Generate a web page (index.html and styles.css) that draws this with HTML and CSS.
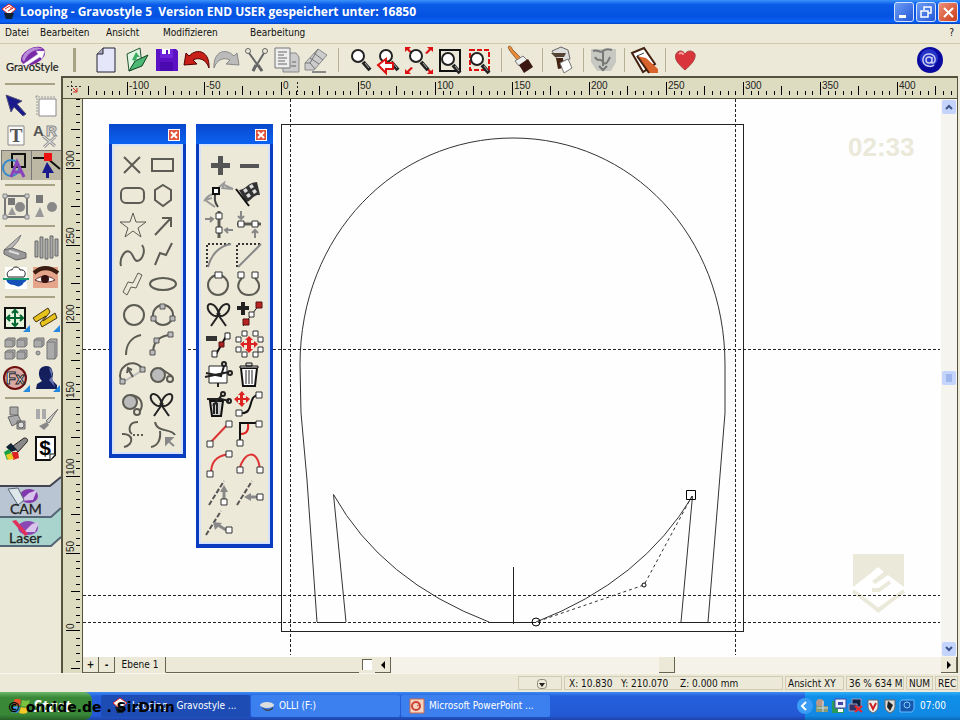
FILE: index.html
```html
<!DOCTYPE html>
<html lang="de">
<head>
<meta charset="utf-8">
<title>Looping - Gravostyle 5</title>
<link rel="stylesheet" href="styles.css">
</head>
<body>
<header class="titlebar">
  <svg class="appicon" width="16" height="18" viewBox="0 0 16 18"><path d="M8 1L15 6 8 12 1 6z" fill="#fff" stroke="#d22"/><path d="M4 6L9 3M7 8L12 5L9 5" stroke="#d22" fill="none"/><path d="M3 10h10l-2 6H5z" fill="#123"/></svg>
  <h1>Looping - Gravostyle 5&nbsp; Version END USER gespeichert unter: 16850</h1>
  <div class="winbuttons">
    <button class="win" aria-label="Minimieren"><svg width="18" height="18"><path d="M4 13.5h7" stroke="#fff" stroke-width="3"/></svg></button>
    <button class="win" aria-label="Wiederherstellen"><svg width="18" height="18"><path d="M7 7V4h7v6h-3M4 8h7v6H4z" stroke="#fff" stroke-width="1.5" fill="none"/></svg></button>
    <button class="win close" aria-label="Schließen"><svg width="18" height="18"><path d="M5 5l9 9M14 5l-9 9" stroke="#fff" stroke-width="2"/></svg></button>
  </div>
</header>
<nav class="menubar">
  <button>Datei</button><button>Bearbeiten</button><button>Ansicht</button><button>Modifizieren</button><button>Bearbeitung</button><button class="help">?</button>
</nav>
<div class="toolbar">
  <div class="logo"><svg width="60" height="32" viewBox="0 0 60 32"><ellipse cx="27" cy="12" rx="13" ry="8" transform="rotate(-28 27 12)" fill="#7a2aa8"/><path d="M16 15C19 5 29 1 37 5C27 5 21 10 18 18z" fill="#b98ad8"/><path d="M16 21L32 10l-2-3 9 0-3 8-2-2-14 9z" fill="#fff" stroke="#b9a6d6" stroke-width=".5"/><text x="0" y="27" class="logotext">GravoStyle</text></svg></div>
  <i class="sep thick"></i>
  <button class="tool" aria-label="Neu"><svg viewBox="0 0 30 30"><path d="M12 3H24V27H6V9z" fill="#e6e6fb" stroke="#223"/><path d="M6 9h6V3" fill="#aab" stroke="#223"/></svg></button>
  <button class="tool" aria-label="Öffnen"><svg viewBox="0 0 30 30"><path d="M6 9l13-6 2 17L8 26z" fill="#dff5e2" stroke="#253"/><path d="M8 26L14 16 27 10 21 21z" fill="#4db873" stroke="#142"/><path d="M11 15l4-8 4 5-3 0-1 4z" fill="#3cae60"/></svg></button>
  <button class="tool" aria-label="Speichern"><svg viewBox="0 0 30 30"><path d="M5 4H25l2 2V26H5z" fill="#5c12c4"/><path d="M9 4h13v9H9z" fill="#6f24dc"/><path d="M11 4h8v5h-8z" fill="#fff"/><path d="M15 5h2v4h-2z" fill="#5c12c4"/><path d="M9 17h13v9H9z" fill="#4a0ab0"/></svg></button>
  <button class="tool" aria-label="Rückgängig"><svg viewBox="0 0 30 30"><path d="M3 20L5 8l3 3C17 2 29 7 28 23C25 14 18 12 12 15l4 4z" fill="#c62018" stroke="#500"/></svg></button>
  <button class="tool" aria-label="Wiederholen"><svg viewBox="0 0 30 30"><path d="M28 20L26 8l-3 3C14 2 2 7 3 23C6 14 13 12 19 15l-4 4z" fill="#bbb" stroke="#888"/></svg></button>
  <button class="tool" aria-label="Ausschneiden"><svg viewBox="0 0 30 30" fill="none" stroke="#666"><path d="M8 8L21 26M23 8L12 26" stroke-width="2"/><path d="M12 26l3-6M21 26l-4-6" stroke-width="3"/><circle cx="7" cy="6" r="2.500"/><circle cx="24" cy="6" r="2.500"/></svg></button>
  <button class="tool" aria-label="Kopieren"><svg viewBox="0 0 30 30"><path d="M12 8h13l3 4v15H12z" fill="#ccc" stroke="#888"/><path d="M4 3h15v20H4z" fill="#eee" stroke="#777"/><path d="M7 7h9M7 10h6M7 13h9M7 16h7M7 19h9M21 17h4M20 21h5" stroke="#666"/></svg></button>
  <button class="tool" aria-label="Löschen"><svg viewBox="0 0 30 30"><path d="M4 18L17 4l9 6L13 25H4z" fill="#ccc" stroke="#888"/><path d="M17 4l-8 14 5 6M13 8l9 7M9 13l9 6" stroke="#777" fill="none"/><path d="M4 18h5" stroke="#777"/><path d="M11 27h14" stroke="#888" stroke-width="2"/></svg></button>
  <i class="sep wide"></i>
  <button class="tool" aria-label="Zoom"><svg viewBox="0 0 30 30"><use href="#lens"/></svg></button>
  <button class="tool" aria-label="Zoom zurück"><svg viewBox="0 0 30 30"><use href="#lens" x="-2"/><path d="M2 20l8-6v4h7v6h-7v4z" fill="#fff" stroke="#d11" stroke-width="2"/></svg></button>
  <button class="tool" aria-label="Zoom alles"><svg viewBox="0 0 30 30"><path d="M-1 2h6L3 4l4 4-2 1-4-4-2 2zM27 2h-6l2 2-4 4 2 1 4-4 2 2zM-1 29h6l-2-2 4-4-2-1-4 4-2-2zM27 29h-6l2-2-4-4 2-1 4 4 2-2z" fill="#d11"/><use href="#lens" x="-2"/></svg></button>
  <button class="tool" aria-label="Zoom Seite"><svg viewBox="0 0 30 30"><path d="M4 5H24V26H4z" fill="none" stroke="#111" stroke-width="2"/><use href="#lens" y="3"/></svg></button>
  <button class="tool" aria-label="Zoom Auswahl"><svg viewBox="0 0 30 30"><path d="M4 5H23V25H4z" fill="none" stroke="#d11" stroke-width="2" stroke-dasharray="5 2"/><use href="#lens" x="-1" y="3"/></svg></button>
  <i class="sep"></i>
  <button class="tool" aria-label="Pinsel"><svg viewBox="0 0 30 30"><path d="M1 2c2-2 4 0 4 2l9 9-3 3-8-10z" fill="#e88a3c" stroke="#963"/><path d="M8 16l8-5 4 4-8 6z" fill="#eee" stroke="#777"/><path d="M12 20l9-6 5 8-9 6z" fill="#3a1712"/></svg></button>
  <i class="sep"></i>
  <button class="tool" aria-label="Gravieren"><svg viewBox="0 0 30 30"><path d="M4 6l9-4 7 3 2 9-11 3z" fill="#ddd" stroke="#666"/><path d="M3 8h15l-2 4H7z" fill="#543"/><path d="M8 13h7v10l-5 1z" fill="#421"/><path d="M12 18l8-4 4 9-8 5z" fill="#fff" stroke="#777"/></svg></button>
  <i class="sep"></i>
  <button class="tool" aria-label="Relief"><svg viewBox="0 0 30 30"><path d="M2 4h25v13l-5 9H8l-6-9z" fill="#c8c8c2"/><path d="M4 6c6-2 7 3 10 0s6-2 9-1M6 12c3 6 5 0 8 5s6-3 7-5M10 21l4 4 4-4M14 7v14" stroke="#777" stroke-width="2" fill="none"/></svg></button>
  <i class="sep"></i>
  <button class="tool" aria-label="Notiz"><svg viewBox="0 0 30 30"><path d="M2 8l12-5 11 16-12 8z" fill="#fff" stroke="#421" stroke-width="2"/><path d="M7 11l7-3" stroke="#444"/><path d="M7 11l9 2 12 11v4h-9z" fill="#d8642c"/><path d="M7 11l12 17" stroke="#421" stroke-width="2"/></svg></button>
  <i class="sep"></i>
  <button class="tool" aria-label="Favorit"><svg viewBox="0 0 30 30"><path d="M14 25C7 19 3 14 5 9C7 5 12 5 14 9C16 5 22 5 24 9C25 14 21 19 14 25z" fill="#d9343c" stroke="#a44"/><path d="M8 9c2-2 4-1 4 1" stroke="#f99" fill="none" stroke-width="2"/></svg></button>
  <button class="tool web" aria-label="Internet"><svg viewBox="0 0 30 30"><circle cx="15" cy="15" r="13" fill="#0a0aa0"/><circle cx="14" cy="13" r="9" fill="#2434c8"/><path d="M17 12v6c4 1 5-8-2-9c-8-1-10 10-2 12c3 1 5 0 6-1M17 15a3 3 0 1 0-3 3c2 0 3-1 3-3" stroke="#cce" stroke-width="1.5" fill="none"/></svg></button>
</div>
<main>
  <aside class="sidebar">
    <hr>
    <div class="pair">
      <button class="tool" aria-label="Auswahl"><svg viewBox="0 0 30 30"><path d="M5 5l16 6-5 3 9 10-3 2-9-9-3 5z" fill="#1a1a8c" stroke="#557"/></svg></button>
      <button class="tool" aria-label="Seite"><svg viewBox="0 0 30 30"><path d="M4 7h20M6 5v20" fill="none" stroke="#999" stroke-dasharray="2 1"/><path d="M8 9h17v17H8z" fill="#fff" stroke="#888"/></svg></button>
      <button class="tool" aria-label="Text"><svg viewBox="0 0 30 30"><path d="M7 6h16v19H7z" fill="#fafafa" stroke="#888"/><text x="15" y="22" text-anchor="middle" class="serif">T</text></svg></button>
      <button class="tool" aria-label="Textstil"><svg viewBox="0 0 30 30"><path d="M12 16l12 10M24 17l-11 10" stroke="#999" stroke-width="3"/><path d="M12 16l12 10M24 17l-11 10" stroke="#eee"/><text x="2" y="16" class="letter">A</text><text x="15" y="16" class="letter light">R</text></svg></button>
      <button class="tool pressed" aria-label="Formen"><svg viewBox="0 0 30 30"><path d="M11 4h13v13H11z" fill="none" stroke="#111" stroke-width="2"/><circle cx="10" cy="18" r="8" fill="none" stroke="#38c" stroke-width="2"/><path d="M10 27l6-15 7 15M12 22h9" fill="none" stroke="#84b" stroke-width="3"/></svg></button>
      <button class="tool pressed" aria-label="Punkte"><svg viewBox="0 0 30 30"><path d="M2 8h14l13 11" stroke="#111" fill="none" stroke-width="2"/><path d="M13 3h8v8h-8z" fill="#e11"/><path d="M16 12l7 11h-5v5h-3v-5h-4z" fill="#1a1a8c"/></svg></button>
    </div>
    <hr>
    <div class="pair">
      <button class="tool" aria-label="Gruppieren"><svg viewBox="0 0 30 30"><path d="M4 5h22v21H4z" fill="none" stroke="#777" stroke-width="2"/><path d="M2 3h4v4H2zM24 3h4v4h-4zM2 24h4v4H2zM24 24h4v4h-4z" fill="#ccc" stroke="#888"/><path d="M7 7h7v7H7z" fill="#777"/><circle cx="19" cy="16" r="5" fill="#888"/><path d="M11 16l4 8H7z" fill="#999"/></svg></button>
      <button class="tool" aria-label="Gruppierung aufheben"><svg viewBox="0 0 30 30"><path d="M5 4h7v8H5z" fill="#777"/><circle cx="21" cy="16" r="5" fill="#888"/><path d="M9 16l4 10H4z" fill="#999"/></svg></button>
    </div>
    <hr>
    <div class="pair">
      <button class="tool" aria-label="Scannen"><svg viewBox="0 0 30 30"><path d="M3 18L20 3l-3 6-7 8z" fill="#bbb" stroke="#777"/><path d="M3 18l8-2 14 5v5l-10 2-12-6z" fill="#999" stroke="#666"/><path d="M8 19l10 3" stroke="#ddd" stroke-width="2"/></svg></button>
      <button class="tool" aria-label="Bibliothek"><svg viewBox="0 0 30 30"><path d="M4 9h3v16H4zM9 5h3v21H9zM14 7h3v20h-3zM19 4h3v22h-3zM24 7h3v17h-3z" fill="#aaa" stroke="#666"/></svg></button>
      <button class="tool" aria-label="Vektorisieren"><svg viewBox="0 0 30 30"><path d="M4 5h22v22H4z" fill="#fff"/><path d="M7 15C4 10 10 7 11 8c1-4 7-4 8 0 6-1 6 5 4 7z" fill="#fff" stroke="#222"/><path d="M5 16h21c0 4-4 4-4 6-4 4-6 2-9 1-5 0-8-3-8-7z" fill="#1450b8"/><path d="M2 17h26" stroke="#1a9870" stroke-width="2"/></svg></button>
      <button class="tool" aria-label="Foto"><svg viewBox="0 0 30 30"><path d="M2 5h25v21H2z" fill="#e5a58a"/><path d="M3 11c8-7 16-6 24 0" stroke="#3a1c10" stroke-width="4" fill="none"/><path d="M4 18c6-5 14-5 20 0-6 3-14 3-20 0z" fill="#fff" stroke="#633"/><circle cx="14" cy="17" r="4" fill="#311"/></svg></button>
    </div>
    <hr>
    <div class="pair">
      <button class="tool" aria-label="Verschieben"><svg viewBox="0 0 30 30"><path d="M4 5h20v20H4z" fill="#e8f4dc" stroke="#111" stroke-width="2"/><path d="M14 7v16M6 15h16M11 10l3-3 3 3M11 20l3 3 3-3M9 12l-3 3 3 3M19 12l3 3-3 3" stroke="#063" stroke-width="2" fill="none"/><use href="#corner"/></svg></button>
      <button class="tool" aria-label="Messen"><svg viewBox="0 0 30 30"><path d="M2 15l15-10 2 4-7 9 12-8 2 5-15 9-2-4 6-7-10 6z" fill="#e6c21c" stroke="#431"/><use href="#corner"/></svg></button>
      <button class="tool" aria-label="Ausrichten"><svg viewBox="0 0 30 30" fill="#aaa" stroke="#777"><path d="M4 7l3-2h7v7l-2 2H4zM16 7l3-2h7v7l-2 2h-8zM4 19l3-2h7v7l-2 2H4zM16 19l3-2h7v7l-2 2h-8zM4 7h8v7M16 7h8v7M4 19h8v7M16 19h8v7"/></svg></button>
      <button class="tool" aria-label="Verteilen"><svg viewBox="0 0 30 30" fill="#aaa" stroke="#777"><path d="M3 7l3-2h7v7l-2 2H3zM16 9l3-3h7v17l-2 3h-8zM3 7h8v7M16 9h8v17"/><circle cx="7" cy="20" r="2"/></svg></button>
      <button class="tool" aria-label="Effekte"><svg viewBox="0 0 30 30"><circle cx="14" cy="15" r="11" fill="#d9a9a4" stroke="#6e0f0f" stroke-width="2"/><text x="5" y="21" class="fx">Fx</text><use href="#corner"/></svg></button>
      <button class="tool" aria-label="Porträt"><svg viewBox="0 0 30 30"><path d="M9 6c3-4 11-4 12 1l1 4-1 6 5 5v4H5l1-5 5-3c-3-3-4-8-2-12z" fill="#14205e"/><path d="M18 5c4 1 3 5 3 8l-3 4 6 7z" fill="#6674b0"/><use href="#corner"/></svg></button>
    </div>
    <hr>
    <div class="pair">
      <button class="tool" aria-label="Maschine"><svg viewBox="0 0 30 30" fill="#aaa" stroke="#666"><path d="M9 3h8v8H9zM7 13l10-2 3 6-9 5zM16 17h8v8h-8z"/><circle cx="20" cy="21" r="3" fill="#ddd"/></svg></button>
      <button class="tool" aria-label="Farben"><svg viewBox="0 0 30 30"><path d="M5 5h4v10H5zM11 5h4v10h-4z" fill="#aaa"/><path d="M27 5l-9 14-3-2z" fill="#ccc" stroke="#777"/><path d="M8 22l8-4 2 3-5 5z" fill="#888"/></svg></button>
      <button class="tool" aria-label="Malen"><svg viewBox="0 0 30 30"><path d="M12 12l11-8c4 0 4 2 3 4l-9 10z" fill="#888" stroke="#222"/><path d="M5 13l5-4 6 7-6 2z" fill="#123"/><path d="M3 18l5-3 4 7-6 4z" fill="#18a044"/><path d="M11 18l6 0 1 6-6 2z" fill="#d22"/><path d="M5 21l5-2 3 6-6 1z" fill="#ec2"/></svg></button>
      <button class="tool" aria-label="Kosten"><svg viewBox="0 0 30 30"><path d="M5 3h19v18l-5 5H5z" fill="#fff" stroke="#111" stroke-width="2"/><path d="M24 20h-5v6" fill="#fff" stroke="#111"/><text x="14" y="21" text-anchor="middle" class="dollar">$</text></svg></button>
    </div>
    <div class="modes">
      <button class="mode" aria-label="CAM"><svg width="61" height="40" viewBox="0 0 61 40"><path d="M0 9H50L61 0V30L51 40H0z" fill="#b9c5d2"/><path d="M0 9H50L61 0" fill="none" stroke="#445" stroke-width="2"/><ellipse cx="29" cy="19" rx="9" ry="7" fill="#8038ac"/><path d="M20 24l9-8 8-3-4 10z" fill="#d9c4ec"/><path d="M8 12l10-1 6 12-6 5z" fill="#dfe6ea" stroke="#567"/><text x="10" y="37" class="modetext">CAM</text></svg></button>
      <button class="mode" aria-label="Laser"><svg width="61" height="30" viewBox="0 0 61 30"><path d="M0 0H51L61-9V20L51 30H0z" fill="#a9d3cd"/><path d="M0 0H51L61-9M0 29H51L61 20" fill="none" stroke="#567" stroke-width="2"/><ellipse cx="28" cy="11" rx="10" ry="7" fill="#8a48b4"/><path d="M24 15l8-8 7-2-4 10z" fill="#d9c4ec"/><path d="M12 4l4-1 12 14-3 2z" fill="#e2305c"/><text x="9" y="26" class="modetext">Laser</text></svg></button>
    </div>
  </aside>
  <section class="workspace">
    <svg class="hruler" width="100%" height="20">
      <defs>
        <pattern id="ht" x="218" y="0" width="77" height="20" patternUnits="userSpaceOnUse"><path d="M0 4h1v13h-1zM38 8h1v9h-1zM8 13h1v4h-1zM15 13h1v4h-1zM23 13h1v4h-1zM31 13h1v4h-1zM46 13h1v4h-1zM54 13h1v4h-1zM62 13h1v4h-1zM69 13h1v4h-1z"/></pattern>
        <pattern id="vt" x="0" y="531" width="20" height="77" patternUnits="userSpaceOnUse"><path d="M3 0h14v1h-14zM8 38h9v1h-9zM13 8h4v1h-4zM13 15h4v1h-4zM13 23h4v1h-4zM13 31h4v1h-4zM13 46h4v1h-4zM13 54h4v1h-4zM13 62h4v1h-4zM13 69h4v1h-4z"/></pattern>
      </defs>
      <rect x="22" width="871" height="20" fill="url(#ht)"/>
      <path d="M4 8.500h14M8.500 3v14" stroke="#333" stroke-dasharray="2 2"/><path d="M10 10l4 4M14 10v4h-4" stroke="#c22" fill="none"/>
      <path d="M234.500 4v13" stroke="#222" stroke-dasharray="2 2"/>
      <g class="ticklabel"><text x="66" y="11">-100</text><text x="143" y="11">-50</text><text x="220" y="11">0</text><text x="297" y="11">50</text><text x="374" y="11">100</text><text x="451" y="11">150</text><text x="528" y="11">200</text><text x="605" y="11">250</text><text x="682" y="11">300</text><text x="759" y="11">350</text><text x="836" y="11">400</text></g>
    </svg>
    <svg class="vruler" width="20" height="100%">
      <rect width="20" height="100%" fill="url(#vt)"/>
      <g class="ticklabel"><text transform="translate(11 530) rotate(-90)">0</text><text transform="translate(11 453) rotate(-90)">50</text><text transform="translate(11 376) rotate(-90)">100</text><text transform="translate(11 299) rotate(-90)">150</text><text transform="translate(11 222) rotate(-90)">200</text><text transform="translate(11 145) rotate(-90)">250</text><text transform="translate(11 68) rotate(-90)">300</text></g>
    </svg>
    <svg class="canvas" width="100%" height="100%">
      <g transform="translate(-83 -99)">
        <path d="M853 554h51v37l-25.500 22-25.500-22z" fill="#ebe9da"/>
        <path d="M853 587l18-14 7-6 6 5-12 9 3 3 13-9 16 12v3l-25.500 20-25.500-20z" fill="#fff"/><path d="M872 590h7l11-8" stroke="#ebe9da" stroke-width="4" fill="none"/>
        <path d="M853 591l25.500 19 25.500-19" stroke="#ebe9da" stroke-width="4" fill="none"/>
        <text x="848" y="156" class="clockmark">02:33</text>
        <g fill="none" stroke="#222" shape-rendering="crispEdges">
          <path d="M83 349.500H940M83 595.500H940M83 622.500H940M290.500 99V655M735.500 99V655" stroke-dasharray="3 2"/>
          <path d="M281.500 124.500H743.500V631.500H281.500zM513.500 567V624M317 622.500H346M681 622.500H708M489 622.500H536"/>
        </g>
        <g fill="none" stroke="#333">
          <path d="M317 622L307 480 301 413 300 365C300 235 395 138 513 138C631 138 725 235 725 365V413L718 500 708 622"/>
          <path d="M346 622L333.500 494.500Q382 581 489 622M681 622L692.500 496Q642 581 536 622"/>
          <path d="M692 496L644 585 536 622" stroke-dasharray="3 3"/>
          <path d="M686.500 490.500h9v9h-9z" stroke="#000"/><circle cx="536" cy="622" r="4" stroke="#000"/><circle cx="644" cy="585" r="2" fill="#fff" stroke="#000"/>
        </g>
      </g>
    </svg>
    <div class="vscroll"><button aria-label="Nach oben"><svg width="14" height="14"><path d="M4 9l3-3 3 3" class="chev"/></svg></button><button aria-label="Bildlauf"><svg width="14" height="14"><path d="M4 4h6M4 6h6M4 8h6M4 10h6" stroke="#7a9ad8"/></svg></button><button aria-label="Nach unten"><svg width="14" height="14"><path d="M4 5l3 3 3-3" class="chev"/></svg></button></div>
    <div class="layers">
      <button class="lay small">+</button><button class="lay small">-</button><button class="lay name">Ebene 1</button>
      <div class="track"></div>
      <input type="checkbox" aria-label="Ebene sichtbar">
      <button class="lay small" aria-label="Nach links"><svg width="8" height="8"><path d="M6 0v8L2 4z"/></svg></button>
      <div class="hscroll"><i></i></div>
      <button class="lay small" aria-label="Nach rechts"><svg width="8" height="8"><path d="M2 0v8l4-4z"/></svg></button>
    </div>
  </section>
</main>
<footer class="status">
  <span class="cell lock"><svg width="12" height="13"><rect x="1.500" y="2.500" width="9" height="9" rx="3" fill="none" stroke="#887"/><path d="M3 6h6L6 10z" fill="#222"/></svg></span>
  <span class="cell coords"><span>X: 10.830</span><span>Y: 210.070</span><span>Z: 0.000 mm</span></span>
  <span class="cell view">Ansicht XY</span><span class="cell mem">36 % 634 M</span><span class="cell num">NUM</span><span class="cell rec">REC</span>
</footer>
<div class="taskbar">
  <button class="start"><svg width="22" height="20" viewBox="0 0 22 20"><path d="M3 4c3-2 5-1 7 0l-1 6c-3-1-5-1-7 0z" fill="#e8542c"/><path d="M11 4c3 1 5 1 8 0l-2 6c-2 1-4 1-7 0z" fill="#7cc242"/><path d="M2 11c3-1 4-1 7 0l-2 6c-2-1-4-1-6 0z" fill="#4a9ae8"/><path d="M10 11c2 1 5 1 7 0l-1 6c-3 1-5 1-8 0z" fill="#f4c828"/></svg>Start</button>
  <button class="task active"><svg width="16" height="18" viewBox="0 0 16 18"><path d="M8 1L15 6 8 12 1 6z" fill="#fff" stroke="#d22"/><path d="M3 10h10l-2 6H5z" fill="#123"/></svg>Looping - Gravostyle ...</button>
  <button class="task"><svg width="16" height="18" viewBox="0 0 16 18"><ellipse cx="8" cy="8" rx="7" ry="3" fill="#ddd"/><path d="M2 9c3 4 8 5 12 1v2c-4 3-9 3-12-3z" fill="#444"/></svg>OLLI (F:)</button>
  <button class="task"><svg width="16" height="18" viewBox="0 0 16 18"><path d="M1 2h14v14H1z" fill="#f6d4c4" stroke="#c64"/><circle cx="7" cy="9" r="4" fill="none" stroke="#c43" stroke-width="2"/><path d="M8 9l3-2" stroke="#c43"/></svg>Microsoft PowerPoint ...</button>
  <div class="tray">
    <button class="expand" aria-label="Symbole einblenden"><svg width="16" height="18"><circle cx="8" cy="9" r="8" fill="#3a9cf4"/><path d="M9 5L5 9l4 4" stroke="#fff" stroke-width="2" fill="none"/></svg></button>
    <svg width="16" height="16"><circle cx="6" cy="5" r="4" fill="#b98"/><path d="M2 8h12v6H2z" fill="#8b9a70"/><path d="M9 3v11M3 10h11" stroke="#cde"/></svg>
    <svg width="16" height="16"><path d="M1 3h12v12H1z" fill="#2a9a5a"/><path d="M4 1h11v9H4z" fill="#e8f0ff" stroke="#44a"/><path d="M7 4h5v3H7z" fill="#44a"/><path d="M7 11h5v3H7z" fill="#fff"/></svg>
    <svg width="16" height="16"><path d="M4 1h9v8H4z" fill="#124" stroke="#99b"/><path d="M1 6h8v7H1z" fill="#336" stroke="#99b"/><path d="M7 8l7 6M14 8l-7 6" stroke="#e22" stroke-width="2"/></svg>
    <svg width="16" height="16"><path d="M3 2h10v7c0 3-3 5-5 6-2-1-5-3-5-6z" fill="#eee" stroke="#666"/><path d="M5 5l3 6 3-6" stroke="#c22" stroke-width="2" fill="none"/></svg>
    <svg width="16" height="16"><path d="M3 2h10v7c0 3-3 5-5 6-2-1-5-3-5-6z" fill="#ddd" stroke="#666"/><path d="M6 3l5 4-3 6-3-4z" fill="#222"/></svg>
    <svg width="16" height="16"><path d="M3 2h12v9l-2 3H1V4z" fill="#1558b0" stroke="#6bf"/><circle cx="8" cy="7" r="3" fill="none" stroke="#8cf"/></svg>
    <time>07:00</time>
  </div>
  <span class="credit">© onride.de . SirDinn</span>
</div>

<div class="palette shapes">
  <div class="pbar"><button class="pclose" aria-label="Schließen"><svg width="10" height="10"><path d="M2 2l6 6M8 2l-6 6" stroke="#fff" stroke-width="2"/></svg></button></div>
  <div class="pbody">
    <button class="tool" aria-label="Kreuz"><svg viewBox="0 0 30 30" class="ln"><path d="M7 7l16 16M23 7L7 23"/></svg></button>
    <button class="tool" aria-label="Rechteck"><svg viewBox="0 0 30 30" class="ln"><path d="M5 9h21v12H5z"/></svg></button>
    <button class="tool" aria-label="Abgerundetes Rechteck"><svg viewBox="0 0 30 30" class="ln"><rect x="4" y="8" width="23" height="15" rx="5"/></svg></button>
    <button class="tool" aria-label="Vieleck"><svg viewBox="0 0 30 30" class="ln"><path d="M16 5l8 5v10l-8 6-8-6V10z"/></svg></button>
    <button class="tool" aria-label="Stern"><svg viewBox="0 0 30 30" class="ln thin"><path d="M16 3l3 9h10l-8 6 3 9-8-6-8 6 3-9-8-6h10z"/></svg></button>
    <button class="tool" aria-label="Pfeil"><svg viewBox="0 0 30 30" class="ln"><path d="M8 25L24 8M15 8h9v9"/></svg></button>
    <button class="tool" aria-label="Kurve"><svg viewBox="0 0 30 30" class="ln"><path d="M4 26C2 18 8 9 13 12C17 15 16 20 20 21C26 20 29 10 25 5"/></svg></button>
    <button class="tool" aria-label="Linienzug"><svg viewBox="0 0 30 30" class="ln"><path d="M8 25l5-12 6 2 6-12"/></svg></button>
    <button class="tool" aria-label="Band"><svg viewBox="0 0 30 30" class="ln thin"><path d="M6 22l5-10 5 1 5-10 4 2-6 13-5-1-4 8z"/></svg></button>
    <button class="tool" aria-label="Ellipse"><svg viewBox="0 0 30 30" class="ln"><ellipse cx="16" cy="14" rx="13" ry="6"/></svg></button>
    <button class="tool" aria-label="Kreis"><svg viewBox="0 0 30 30" class="ln"><circle cx="17" cy="15" r="10"/></svg></button>
    <button class="tool" aria-label="Kreis mit drei Punkten"><svg viewBox="0 0 30 30" class="ln"><circle cx="16" cy="15" r="10"/><g class="gnode"><path d="M13 4h5v5h-5zM4 16h5v5H4zM23 16h5v5h-5z"/></g></svg></button>
    <button class="tool" aria-label="Bogen"><svg viewBox="0 0 30 30" class="ln"><path d="M9 25C9 14 15 7 24 5"/></svg></button>
    <button class="tool" aria-label="Bogen mit Punkten"><svg viewBox="0 0 30 30" class="ln"><path d="M6 23c0-6 1-9 4-12M10 10c4-3 8-5 14-5"/><g class="gnode"><path d="M3 20h5v5H3zM7 8h5v5H7zM21 2h5v5h-5z"/></g></svg></button>
    <button class="tool" aria-label="Bogen mit Radius"><svg viewBox="0 0 30 30" class="ln"><path d="M6 22L26 10" stroke="#bbb"/><path d="M4 20C-1 9 14-4 25 8" /><path d="M16 17l-5-8M10 13l1-5 4 2"/><g class="gnode"><path d="M3 19h5v5H3zM23 7h5v5h-5z"/></g></svg></button>
    <button class="tool" aria-label="Tangente außen"><svg viewBox="0 0 30 30" class="ln"><circle cx="11" cy="15" r="7" fill="#bbb"/><circle cx="23" cy="19" r="3"/><path d="M13 8l12 8"/></svg></button>
    <button class="tool" aria-label="Tangente innen"><svg viewBox="0 0 30 30" class="ln"><circle cx="13" cy="12" r="7" fill="#bbb"/><circle cx="20" cy="22" r="3"/><path d="M14 5c10 1 13 9 9 16"/></svg></button>
    <button class="tool" aria-label="Schleife"><svg viewBox="0 0 30 30" class="ln dark"><use href="#bow"/></svg></button>
    <button class="tool" aria-label="Verlängern"><svg viewBox="0 0 30 30" class="ln"><path d="M21 2c-11 0-9 10-6 12M5 14c12-1 12 11 2 13"/><path d="M16 15h11" stroke-dasharray="2 2"/></svg></button>
    <button class="tool" aria-label="Trennen"><svg viewBox="0 0 30 30" class="ln"><path d="M8 2c2 11 16 6 20 13M4 27c7-1 10-8 9-16"/><path d="M27 26l-8-7M19 24v-6h6z" stroke="#888" fill="#888"/></svg></button>
  </div>
</div>

<div class="palette nodes">
  <div class="pbar"><button class="pclose" aria-label="Schließen"><svg width="10" height="10"><path d="M2 2l6 6M8 2l-6 6" stroke="#fff" stroke-width="2"/></svg></button></div>
  <div class="pbody">
    <button class="tool" aria-label="Hinzufügen"><svg viewBox="0 0 30 30"><path d="M14 6h5v7h7v5h-7v7h-5v-7H7v-5h7z" fill="#555"/></svg></button>
    <button class="tool" aria-label="Entfernen"><svg viewBox="0 0 30 30"><path d="M6 14h19v4H6z" fill="#555"/></svg></button>
    <button class="tool" aria-label="Glätten"><svg viewBox="0 0 30 30" class="ln"><path d="M12 13C4 15 2 18 1 20l7-2M1 20l10 7M12 11C15 7 17 5 20 3l-2 6M18 4l11 5-11-1" stroke="#999"/><path d="M12 12c-2 5-1 11 2 15" stroke="#444"/><g class="wnode"><path d="M9 8h6v6H9z" stroke="#111" stroke-width="2"/></g></svg></button>
    <button class="tool" aria-label="Start"><svg viewBox="0 0 30 30"><path d="M5 10c7 0 8-7 18-8l3 13c-7-1-8 6-14 7z" fill="#333"/><path d="M9 10l2 3 3-2-2-3zM15 6l2 3 3-2-2-3zM12 15l2 3 3-2-2-3zM18 11l2 3 3-2-2-3z" fill="#ddd"/><path d="M2 9l13 17" stroke="#111" stroke-width="2"/></svg></button>
    <button class="tool" aria-label="Vertikal ausrichten"><svg viewBox="0 0 30 30" class="ln"><path d="M15 1v27" stroke-width="3"/><path d="M1 9h8M6 7l3 2-3 3M29 20h-8M24 18l-3 2 3 3" stroke="#888"/><g class="wnode"><path d="M12 3h6v6h-6zM12 17h6v6h-6z"/></g></svg></button>
    <button class="tool" aria-label="Horizontal ausrichten"><svg viewBox="0 0 30 30" class="ln"><path d="M3 14h24" stroke-width="3"/><path d="M7 1v8M4 6l3 3 3-3M21 28v-8M18 23l3-3 3 3" stroke="#888"/><g class="wnode"><path d="M4 11h6v6H4zM18 11h6v6h-6z"/></g></svg></button>
    <button class="tool" aria-label="In Kurve"><svg viewBox="0 0 30 30" class="ln"><path d="M3 27V4h24" stroke="#333" stroke-dasharray="2 2"/><path d="M4 27C7 15 15 6 27 4" stroke="#888"/></svg></button>
    <button class="tool" aria-label="In Linie"><svg viewBox="0 0 30 30" class="ln"><path d="M3 27V4h24" stroke="#333" stroke-dasharray="2 2"/><path d="M4 27L27 4" stroke="#888"/></svg></button>
    <button class="tool" aria-label="Schließen"><svg viewBox="0 0 30 30" class="ln"><circle cx="14" cy="15" r="10"/><g class="wnode"><path d="M11 2h7v6h-7z"/></g></svg></button>
    <button class="tool" aria-label="Öffnen"><svg viewBox="0 0 30 30" class="ln"><path d="M8 8C0 16 6 25 15 25S29 16 21 8"/><g class="wnode"><path d="M4 2h6v6H4zM18 2h6v6h-6z"/></g></svg></button>
    <button class="tool" aria-label="Schleife"><svg viewBox="0 0 30 30" class="ln dark"><use href="#bow"/></svg></button>
    <button class="tool" aria-label="Punkt einfügen"><svg viewBox="0 0 30 30"><path d="M7 2h4v4h4v4h-4v5H7v-5H3V6h4z" fill="#222"/><path d="M9 26L25 5" stroke="#111"/><path d="M22 2h6v6h-6zM9 19h6v6H9z" fill="#b22" stroke="#511"/><path d="M15 12h5v5h-5z" fill="#fff" stroke="#333"/></svg></button>
    <button class="tool" aria-label="Punkt löschen"><svg viewBox="0 0 30 30"><path d="M2 6h11v5H2z" fill="#333"/><path d="M11 26L24 3" stroke="#111" stroke-width="2"/><path d="M21 3h5v6h-5zM8 21h5v6H8z" fill="#fff" stroke="#222"/><path d="M15 12h5v5h-5z" fill="#a22" stroke="#511"/></svg></button>
    <button class="tool" aria-label="Punkte verschieben"><svg viewBox="0 0 30 30"><path d="M15 6l4 4h-2v3h3v-2l4 3-4 4v-3h-3v4h2l-4 4-4-4h2v-4h-3v3l-4-4 4-3v2h3v-3h-2z" fill="#d22"/><g class="wnode"><path d="M8 1h5v5H8zM19 1h5v5h-5zM2 7h5v5H2zM24 7h5v5h-5zM2 17h5v5H2zM24 17h5v5h-5zM8 22h5v5H8zM19 22h5v5h-5z"/></g></svg></button>
    <button class="tool" aria-label="Schneiden"><svg viewBox="0 0 30 30" class="ln dark"><path d="M5 6h18v17H5z" fill="#fff" stroke-width="1"/><path d="M1 17l24-5M2 13l15 3 3-10M14 23v4"/><circle cx="20" cy="4" r="2"/><circle cx="26" cy="13" r="2"/></svg></button>
    <button class="tool" aria-label="Papierkorb"><svg viewBox="0 0 30 30"><path d="M7 8h16l-2 18H9z" fill="#fff" stroke="#111" stroke-width="2"/><path d="M12 10v14M15 10v14M18 10v14" stroke="#222"/><path d="M6 6h18v2H6zM12 3h6v3h-6z" fill="#ddd" stroke="#111"/></svg></button>
    <button class="tool" aria-label="Schneiden und löschen"><svg viewBox="0 0 30 30"><path d="M6 11h13l-2 15H8z" fill="#ccc" stroke="#111" stroke-width="2"/><path d="M10 13v11M13 13v11" stroke="#222" stroke-width="2"/><g class="ln dark"><path d="M3 9h14l8 2M9 16L18 5"/><circle cx="19" cy="4" r="2"/><circle cx="25" cy="11" r="2"/></g></svg></button>
    <button class="tool" aria-label="Segment verschieben"><svg viewBox="0 0 30 30"><path d="M8 1l3 4h-2v3h3V6l4 3-4 4v-3H9v3h2l-3 4-4-4h2v-3H4v3L0 9l4-3v2h2V5H4z" fill="#d22"/><path d="M6 23c15 2 7-17 18-18" fill="none" stroke="#111" stroke-width="2"/><g class="wnode"><path d="M2 20h6v6H2zM22 2h6v6h-6z"/></g></svg></button>
    <button class="tool" aria-label="Linie"><svg viewBox="0 0 30 30"><path d="M6 23L24 4" stroke="#d33" stroke-width="2"/><g class="wnode"><path d="M3 21h6v6H3zM22 1h6v6h-6z"/></g></svg></button>
    <button class="tool" aria-label="Rechter Winkel"><svg viewBox="0 0 30 30"><path d="M6 23V3h19" fill="none" stroke="#111" stroke-width="2"/><path d="M14 4c1 7-2 10-7 10" stroke="#d22" fill="none" stroke-width="2"/><g class="wnode"><path d="M3 20h6v6H3zM22 1h6v6h-6z"/></g></svg></button>
    <button class="tool" aria-label="Bogen"><svg viewBox="0 0 30 30"><path d="M7 24C7 13 11 6 25 4" stroke="#d33" fill="none" stroke-width="2"/><g class="wnode"><path d="M3 21h6v6H3zM22 1h6v6h-6z"/></g></svg></button>
    <button class="tool" aria-label="Halbkreis"><svg viewBox="0 0 30 30"><path d="M5 20C10 1 24-2 26 20" stroke="#d33" fill="none" stroke-width="2"/><g class="wnode"><path d="M3 17h6v6H3zM23 17h6v6h-6z"/></g></svg></button>
    <button class="tool" aria-label="Vertikal einrasten"><svg viewBox="0 0 30 30"><use href="#slant"/><path d="M20 19V9" stroke="#888" stroke-width="3"/><path d="M16 12l4-7 4 7z" fill="#888"/><path d="M17 19h6v6h-6z" class="wnode"/></svg></button>
    <button class="tool" aria-label="Horizontal einrasten"><svg viewBox="0 0 30 30"><use href="#slant" x="-2"/><path d="M23 17H13" stroke="#888" stroke-width="3"/><path d="M17 13l-7 4 7 4z" fill="#888"/><path d="M23 14h6v6h-6z" class="wnode"/></svg></button>
    <button class="tool" aria-label="Senkrecht einrasten"><svg viewBox="0 0 30 30"><use href="#slant" x="-3"/><path d="M22 20l-8-5" stroke="#888" stroke-width="3"/><path d="M11 20l-2-8 9 1z" fill="#888"/><path d="M22 17h6v6h-6z" class="wnode"/></svg></button>
  </div>
</div>

<svg class="defs" width="0" height="0">
  <symbol id="lens" viewBox="0 0 30 30" width="30" height="30"><circle cx="12" cy="11" r="6" fill="#fff" stroke="#222" stroke-width="2"/><path d="M17 17l7 8" stroke="#222" stroke-width="4"/><path d="M19 18l4 5" stroke="#aaa"/></symbol>
  <symbol id="corner" viewBox="0 0 30 30" width="30" height="30"><path d="M29 22v7h-7z" fill="#2488dc"/></symbol>
  <symbol id="slant" viewBox="0 0 30 30" width="30" height="30"><path d="M5 25L20 1" stroke="#555" stroke-width="2" stroke-dasharray="5 2"/></symbol>
  <symbol id="bow" viewBox="0 0 30 30" width="30" height="30"><ellipse cx="9" cy="10" rx="4" ry="7" transform="rotate(-38 9 10)"/><ellipse cx="20" cy="10" rx="4" ry="7" transform="rotate(38 20 10)"/><path d="M7 26L16 13M22 26L13 13"/></symbol>
</svg>
</body>
</html>
```
FILE: styles.css
```css
* { box-sizing: border-box; }
body {
  margin: 0;
  height: 100vh;
  display: flex;
  flex-direction: column;
  position: relative;
  overflow: hidden;
  background: #ece9d8;
  color: #111;
  font: 10px/16px "DejaVu Sans Condensed", "Noto Sans", sans-serif;
}
button { border: 0; padding: 0; margin: 0; background: none; font: inherit; color: inherit; }
svg { display: block; }
.defs { position: absolute; }

.titlebar {
  display: flex;
  align-items: center;
  height: 24px;
  padding: 0 2px 0 1px;
  background: linear-gradient(#3a92f8, #0a5ae8 20%, #0552e0 70%, #0a64fa 90%, #0442c0);
}
.titlebar h1 {
  flex: 1;
  margin: 0 0 0 3px;
  color: #fff;
  font: bold 12px/24px "Open Sans", sans-serif;
}
.winbuttons { display: flex; gap: 2px; }
.win {
  width: 20px;
  height: 20px;
  border: 1px solid #d4e2fc;
  border-radius: 3px;
  background: linear-gradient(135deg, #6c9cf4, #2458d8);
}
.win.close { background: linear-gradient(135deg, #ec9078, #cc3c18); }

.menubar {
  display: grid;
  grid-template-columns: 35px 66px 57px 87px 1fr auto;
  height: 20px;
  padding: 0 6px 1px 5px;
  border-bottom: 1px solid #d0cca8;
}
.menubar button { text-align: left; }

.toolbar { display: flex; align-items: center; height: 32px; }
.logo { width: 70px; padding-left: 6px; }
.logotext { font: 11px "Lato", sans-serif; fill: #222; stroke: #222; stroke-width: .2px; }
.sep { width: 11px; height: 24px; background: linear-gradient(#b5b294, #b5b294) center / 1px 100% no-repeat; }
.sep.thick { width: 21px; background: linear-gradient(#a5a286, #a5a286) 3px 0 / 3px 100% no-repeat; }
.sep.wide { width: 15px; }
.tool { width: 30px; height: 30px; flex: none; }
.tool svg { width: 30px; height: 30px; overflow: visible; }
.web { margin: 0 15px 0 auto; }

main { flex: 1; display: flex; min-height: 0; }
.sidebar { width: 61px; padding-top: 3px; display: flex; flex-direction: column; }
.sidebar hr {
  width: 50px;
  height: 11px;
  margin: 0 5px;
  border: 0;
  background: linear-gradient(#a5a286, #a5a286) 0 4px / 100% 2px no-repeat;
}
.pair { display: grid; grid-template-columns: 30px 30px; padding-left: 1px; }
.pressed { background: #bcb8a4; box-shadow: inset 1px 1px #777; }
.modes { margin-top: 13px; }
.mode { display: block; }
.mode svg { overflow: visible; }
.modetext { font: 14px "Lato", sans-serif; fill: #222; stroke: #222; stroke-width: .3px; }
.serif { font: bold 19px "Liberation Serif", serif; fill: #555; }
.letter { font: bold 15px "Liberation Sans", sans-serif; fill: #555; }
.letter.light { fill: #eee; stroke: #888; }
.fx { font: bold 16px "Liberation Sans", sans-serif; fill: #fff; stroke: #222; }
.dollar { font: bold 21px "Liberation Sans", sans-serif; }

.workspace {
  flex: 1;
  min-width: 0;
  display: grid;
  grid-template: 21px 1fr 16px / 20px 1fr 16px;
  margin-right: 2px;
  border: solid #55523e;
  border-width: 2px 1px 0 2px;
}
.hruler { grid-column: 1 / -1; height: 21px; background: #dedcc0; border-bottom: 1px solid #55523e; }
.vruler { grid-row: 2 / 4; background: #dedcc0; border-right: 1px solid #55523e; }
.canvas { background: #fefefe; min-height: 0; }
.ticklabel { font: 10px "Liberation Sans", sans-serif; fill: #222; }
.clockmark { font: bold 26px "Liberation Sans", sans-serif; fill: #ebe9da; }
.vscroll { display: flex; flex-direction: column; justify-content: space-between; padding: 1px; background: #f5f4ef; }
.vscroll button { height: 14px; border-radius: 2px; background: #c4d4fc; }
.chev { fill: none; stroke: #3c5488; stroke-width: 2; }
.layers { grid-column: 2 / 4; display: flex; align-items: stretch; min-width: 0; background: #ece9d8; }
.lay { border: solid #66634e; border-width: 0 1px 1px 0; line-height: 14px; }
.lay.small { width: 16px; font-weight: bold; }
.lay.small svg { margin: 0 auto; }
.lay.name { width: 51px; border-bottom-color: transparent; }
.track { width: 193px; border-bottom: 1px solid #66634e; }
.layers input { appearance: none; width: 10px; height: 11px; margin: 2px 3px; background: #fff; border: solid #66634e; border-width: 1px 0 0 1px; }
.hscroll { flex: 1; background: #f5f2ea; padding-left: 268px; }
.hscroll i { display: block; width: 16px; height: 16px; background: #ece9d8; border: solid #66634e; border-width: 0 1px 1px 0; }

.status { display: flex; justify-content: flex-end; gap: 2px; height: 19px; padding: 2px 2px 2px 0; border-top: 1px solid #f8f6ec; }
.cell { border: 1px solid #d0ccb4; padding-left: 2px; line-height: 14px; white-space: nowrap; }
.lock { width: 44px; padding-left: 17px; }
.coords { width: 219px; display: grid; grid-template-columns: 52px 59px 1fr; padding-left: 4px; }
.view { width: 59px; }
.mem { width: 58px; }
.num { width: 27px; }
.rec { width: 23px; }

.taskbar {
  position: relative;
  display: flex;
  height: 28px;
  color: #fff;
  background: linear-gradient(#3c8cf4, #2460dc 15%, #2458d4 85%, #1c44a8);
}
.start {
  display: flex;
  align-items: center;
  width: 92px;
  margin-right: 9px;
  padding-left: 11px;
  border-radius: 0 8px 8px 0;
  background: linear-gradient(#6cb86c, #388838 20%, #388838 80%, #286028);
  font: italic bold 16px/28px "Open Sans", sans-serif;
}
.task {
  display: flex;
  align-items: center;
  gap: 4px;
  width: 149px;
  margin: 3px 1px 3px 0;
  padding-left: 8px;
  border-radius: 2px;
  background: #3c80f0;
  white-space: nowrap;
}
.task.active { background: #1c4cb4; padding-left: 11px; }
.tray {
  display: flex;
  align-items: center;
  gap: 1px;
  width: 155px;
  margin-left: auto;
  background: linear-gradient(#30b0f8, #1090e8 15%, #1088e4 85%, #0c68b8);
}
.tray .expand { margin: 0 0 0 -8px; }
.tray time { margin-left: 4px; }
.credit {
  position: absolute;
  left: 7px;
  top: 5px;
  color: #000;
  font: bold 14px/20px "DejaVu Sans", sans-serif;
  white-space: nowrap;
}

.palette {
  position: absolute;
  top: 124px;
  width: 77px;
  border: solid #0a3cc0;
  border-width: 0 3px 4px;
  background: #ece9d8;
}
.shapes { left: 109px; }
.nodes { left: 196px; }
.pbar { display: flex; justify-content: flex-end; align-items: center; height: 20px; margin: 0 -3px; padding: 2px 6px 0 0; background: linear-gradient(#0a48cc, #0a62f0); }
.pclose { width: 12px; height: 12px; border: 1px solid #fff; background: #e0553c; }
.pbody { display: grid; grid-template-columns: 30px 30px; padding: 6px 5px 4px; box-shadow: inset 0 0 0 2px #d6e2f8; }
.ln { fill: none; stroke: #5c5c54; stroke-width: 2; }
.ln.thin { stroke-width: 1; }
.ln.dark { stroke: #222; }
.gnode { fill: #bbb; stroke: #555; stroke-width: 1; }
.wnode { fill: #fff; stroke: #333; stroke-width: 1; }
```
